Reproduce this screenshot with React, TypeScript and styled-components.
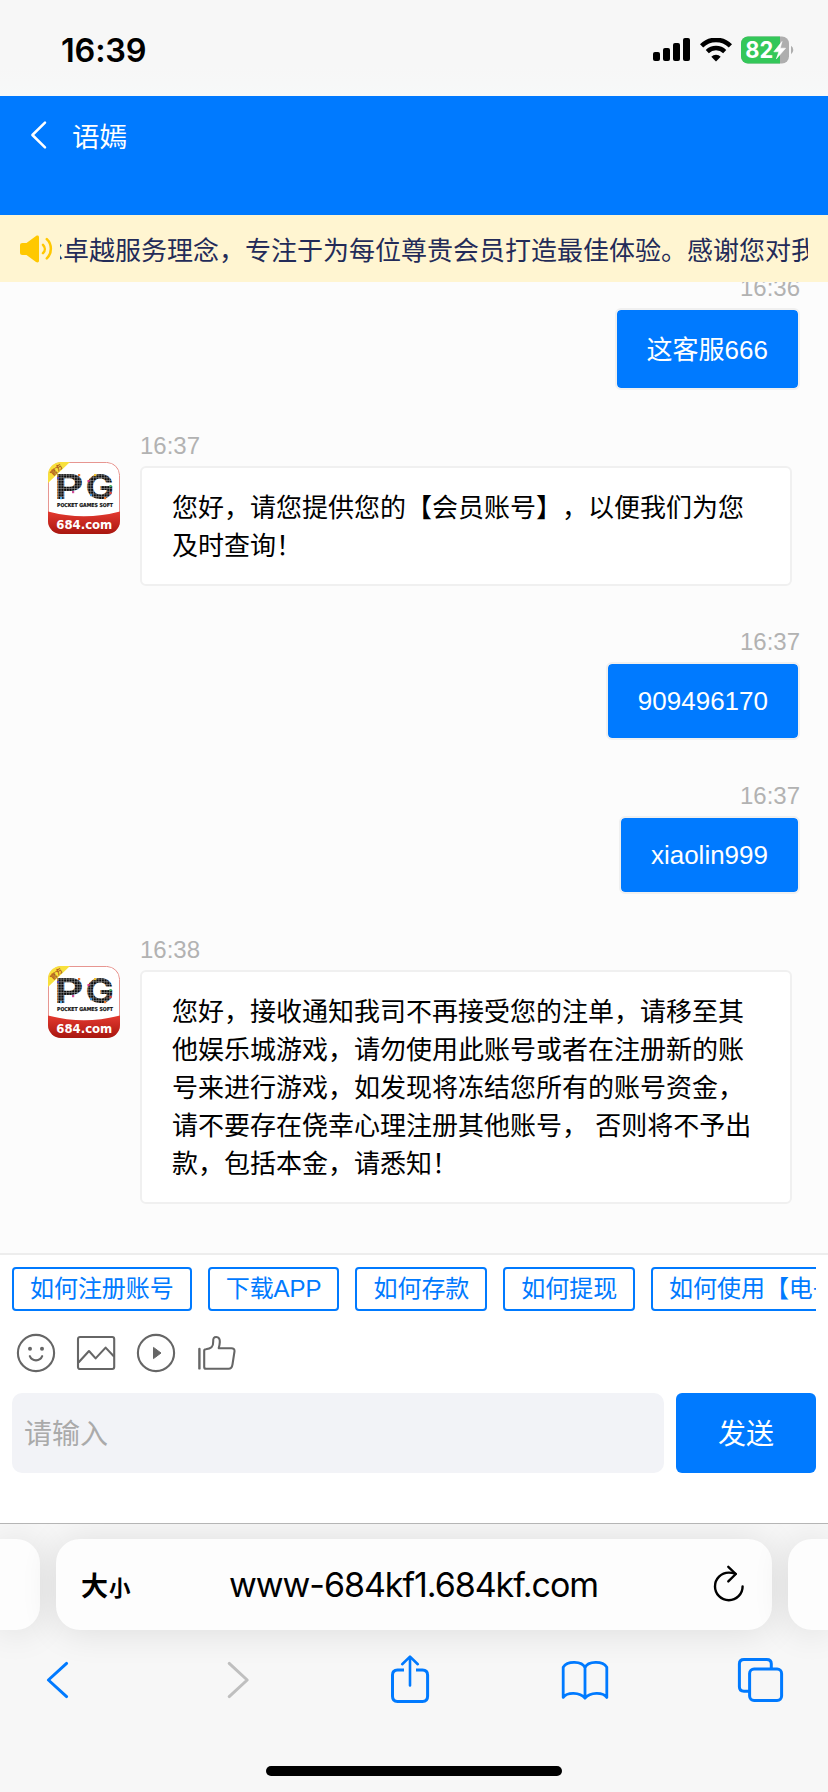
import React from 'react';
import styled, { createGlobalStyle } from 'styled-components';

const BLUE = '#007aff';

const GlobalStyle = createGlobalStyle`
  *, *::before, *::after { box-sizing: border-box; }
  body {
    margin: 0;
    background: #fff;
    font-family: 'Liberation Sans', 'Noto Sans CJK SC', sans-serif;
    text-spacing-trim: space-all;
  }
  svg { display: block; flex: none; }
`;

const Screen = styled.div`
  width: 828px;
  height: 1792px;
  display: flex;
  flex-direction: column;
  overflow: hidden;
`;

const StatusBar = styled.header`
  flex: none;
  height: 96px;
  padding: 4px 33px 0 61px;
  display: flex;
  align-items: center;
  justify-content: space-between;
  background: linear-gradient(#f7f7f7 70%, #f7f9f9);
`;

const Clock = styled.time`
  font: 600 32.5px/40px Inter, sans-serif;
  letter-spacing: -0.2px;
  padding-top: 1px;
  color: #000;
`;

const StatusIcons = styled.div`
  display: flex;
  align-items: center;
  gap: 9px;
`;

const ChatHeader = styled.div`
  flex: none;
  height: 119px;
  padding: 20px 30px;
  display: flex;
  align-items: flex-start;
  background: ${BLUE};
`;

const AgentName = styled.h1`
  margin: 2px 0 0 23px;
  font-size: 27.5px;
  line-height: 40px;
  font-weight: 400;
  color: #fff;
`;

const Notice = styled.div`
  flex: none;
  height: 67px;
  padding: 0 20px;
  display: flex;
  align-items: center;
  gap: 7px;
  background: #fff5d1;
  position: relative;
  z-index: 1;
`;

const Ticker = styled.div`
  flex: 1;
  overflow: hidden;
  white-space: nowrap;
  text-indent: -23px;
  font-size: 26px;
  line-height: 40px;
  margin-top: 5px;
  color: #232b58;
`;

const Chat = styled.main`
  flex: none;
  height: 971px;
  padding: 0 28px 49px 48px;
  display: flex;
  flex-direction: column;
  justify-content: flex-end;
  gap: 42px;
  background: #fcfcfc;
`;

const Row = styled.div<{ $mine?: boolean }>`
  display: flex;
  gap: 20px;
  justify-content: ${(p) => (p.$mine ? 'flex-end' : 'flex-start')};
`;

const AvatarSlot = styled.div`
  padding-top: 30px;
`;

const Message = styled.div<{ $mine?: boolean }>`
  display: flex;
  flex-direction: column;
  gap: 6px;
  align-items: ${(p) => (p.$mine ? 'flex-end' : 'flex-start')};
`;

const Stamp = styled.time`
  font-size: 24px;
  line-height: 28px;
  color: #b2b2b2;
`;

const Bubble = styled.div<{ $mine?: boolean; $latin?: boolean }>`
  width: ${(p) => (p.$mine ? 'auto' : '652px')};
  padding: ${(p) => (p.$latin ? '20px 30px' : '21px 30px 19px')};
  border: 2px solid #f0f0f0;
  border-radius: 6px;
  background: ${(p) => (p.$mine ? BLUE : '#fff')};
  background-clip: padding-box;
  color: ${(p) => (p.$mine ? '#fff' : '#000')};
  font-size: 26px;
  line-height: ${(p) => (p.$latin ? '34px' : '38px')};
  white-space: pre;
`;

const Composer = styled.footer`
  flex: none;
  height: 270px;
  padding: 12px 12px 0;
  border-top: 2px solid #ededed;
  background: #fff;
`;

const QuickReplies = styled.div`
  display: flex;
  gap: 16px;
  overflow: hidden;
`;

const QuickReply = styled.button`
  flex: none;
  height: 44px;
  padding: 0 16px;
  border: 2px solid ${BLUE};
  border-radius: 4px;
  background: transparent;
  color: ${BLUE};
  font: inherit;
  font-size: 24px;
  letter-spacing: -0.05px;
  line-height: 40px;
  white-space: nowrap;
`;

const Tools = styled.div`
  display: flex;
  gap: 20px;
  margin: 22px 0 20px 4px;
`;

const InputRow = styled.div`
  display: flex;
  gap: 12px;
`;

const Field = styled.div`
  flex: 1;
  height: 80px;
  padding: 1px 12px 0;
  border-radius: 10px;
  background: #f2f3f7;
  color: #aaa;
  font-size: 28px;
  line-height: 82px;
`;

const Send = styled.button`
  width: 140px;
  height: 80px;
  padding: 3px 0 0;
  border: 0;
  border-radius: 6px;
  background: ${BLUE};
  color: #fff;
  font: inherit;
  font-size: 28px;
  line-height: 77px;
`;

const Browser = styled.nav`
  flex: 1;
  border-top: 1px solid #b5b5b5;
  background: #f7f7f7;
  display: flex;
  flex-direction: column;
  align-items: center;
  overflow: hidden;
`;

const TabStrip = styled.div`
  width: 100%;
  height: 91px;
  margin-top: 15px;
  display: flex;
  gap: 16px;
`;

const TabCard = styled.div<{ $side?: 'left' | 'right' }>`
  flex: ${(p) => (p.$side ? '0 0 40px' : '1')};
  border-radius: ${(p) =>
    p.$side === 'left' ? '0 24px 24px 0' : p.$side === 'right' ? '24px 0 0 24px' : '24px'};
  background: #fdfdfd;
  box-shadow: 0 2px 36px rgba(0, 0, 0, 0.11);
  padding: ${(p) => (p.$side ? '0' : '0 26px 0 25px')};
  display: flex;
  align-items: center;
  justify-content: space-between;
  position: relative;
`;

const TextSize = styled.span`
  display: flex;
  align-items: baseline;
  width: 34px;
  padding-top: 3px;
  font: 700 27px/40px 'Noto Sans CJK SC', sans-serif;
  color: #000;
  white-space: nowrap;
  small { font-size: 21.5px; margin-left: 1px; }
`;

const Address = styled.span`
  font: 400 34px/44px Inter, sans-serif;
  letter-spacing: -1.05px;
  color: #000;
`;

const Toolbar = styled.div`
  width: 100%;
  margin-top: 20px;
  padding: 0 38px 0 28px;
  display: flex;
  justify-content: space-between;
`;

const HomeBar = styled.div`
  width: 296px;
  height: 10px;
  margin-top: 56px;
  border-radius: 5px;
  background: #000;
`;

const Signal = () => (
  <svg width="38" height="24" viewBox="0 0 38 24">
    <rect x="0" y="14" width="7" height="9" rx="2" />
    <rect x="10" y="10" width="7" height="13" rx="2" />
    <rect x="20" y="5" width="7" height="18" rx="2" />
    <rect x="30" y="0" width="7" height="23" rx="2" />
  </svg>
);

const Wifi = () => (
  <svg width="32" height="24" viewBox="0 0 32 24">
    <path d="M1.6 7.8 A20.5 20.5 0 0 1 30.4 7.8" fill="none" stroke="#000" strokeWidth="4.6" />
    <path d="M7.3 13.6 A12.4 12.4 0 0 1 24.7 13.6" fill="none" stroke="#000" strokeWidth="4.4" />
    <path d="M11.3 18.8 A6.6 6.6 0 0 1 20.7 18.8 L16 23.6 Z" />
  </svg>
);

const Battery = () => (
  <svg width="54" height="28" viewBox="0 0 54 28">
    <defs>
      <clipPath id="cell"><rect x="0" y="0.5" width="48" height="27" rx="7" /></clipPath>
    </defs>
    <g clipPath="url(#cell)">
      <rect width="54" height="28" fill="#aeaeae" />
      <rect width="39" height="28" fill="#34c759" />
    </g>
    <path d="M50 9.8 A5 5 0 0 1 50 18.2 Z" fill="#aeaeae" />
    <text x="4.2" y="22" fontFamily="Inter, sans-serif" fontWeight="700" fontSize="22.5" fill="#fff" textLength="28" lengthAdjust="spacingAndGlyphs">82</text>
    <path d="M41 5.5 L32.8 15.8 H37.8 L35.4 22.8 L44.6 12.2 H39.2 Z" fill="#fff" stroke="#fff" strokeWidth="0.6" strokeLinejoin="round" />
  </svg>
);

const BackArrow = () => (
  <svg width="19" height="38" viewBox="0 0 19 38" fill="none" stroke="#fff" strokeWidth="2.5" strokeLinecap="round" strokeLinejoin="round">
    <path d="M15 6.6 L2.4 19 L15 31.4" />
  </svg>
);

const Speaker = () => (
  <svg width="33" height="28" viewBox="0 0 33 28">
    <path d="M2.5 8 H6.5 L16 1 C17.6 0 19 0.6 19 2.2 V25.8 C19 27.4 17.6 28 16 27 L6.5 20 H2.5 C0.8 20 0 19.2 0 17.5 V10.5 C0 8.8 0.8 8 2.5 8 Z" fill="#ffc800" />
    <path d="M23 9.8 C25.4 12.2 25.4 15.8 23 18.2 M26.8 4.2 C32.2 9.4 32.2 18 26.8 23.4" fill="none" stroke="#ffc800" strokeWidth="2.5" strokeLinecap="round" />
  </svg>
);

const bits: [number, number, string][] = [
  [30, 12, '#e8792e'], [9, 15, '#5b4bb0'], [24, 29, '#d04f9c'], [12, 35, '#4aa3e0'],
  [46, 12, '#f0c330'], [39.5, 18, '#d8358a'], [61.5, 23, '#4cb56a'], [61.5, 30, '#e0443a'],
  [42, 32, '#3f8fd8'], [56, 35, '#e8792e'],
];

const Avatar = ({ id }: { id: string }) => (
  <svg width="72" height="72" viewBox="0 0 72 72">
    <defs>
      <clipPath id={`${id}-c`}><rect width="72" height="72" rx="13" /></clipPath>
      <linearGradient id={`${id}-r`} x1="0" y1="0" x2="0" y2="1">
        <stop offset="0" stopColor="#e43a30" />
        <stop offset="1" stopColor="#a8160f" />
      </linearGradient>
      <pattern id={`${id}-p`} width="2.7" height="2.7" patternUnits="userSpaceOnUse">
        <rect width="2.7" height="2.7" fill="#aaa" />
        <rect width="2.2" height="2.2" fill="#0c0c0c" />
      </pattern>
    </defs>
    <g clipPath={`url(#${id}-c)`}>
      <rect width="72" height="72" fill="#fff" />
      <rect x="0.4" y="0.4" width="71.2" height="71.2" rx="13" fill="none" stroke="#e58a84" strokeWidth="1" />
      <path d="M0 0 H22 L0 21 Z" fill="#f8e03c" />
      <text transform="translate(5 14.5) rotate(-43)" fontFamily="Noto Sans CJK SC" fontWeight="700" fontSize="7" fill="#a8521c">官方</text>
      <g fontFamily="Inter" fontWeight="700" fontSize="34.5" fill={`url(#${id}-p)`}>
        <text x="6.6" y="37" textLength="29" lengthAdjust="spacingAndGlyphs">P</text>
        <text x="37.4" y="37" textLength="28.5" lengthAdjust="spacingAndGlyphs">G</text>
      </g>
      {bits.map(([x, y, c], i) => <rect key={i} x={x} y={y} width="2.2" height="2.2" fill={c} />)}
      <text x="9" y="44.6" fontFamily="DejaVu Sans" fontWeight="700" fontSize="5.4" fill="#111" stroke="#111" strokeWidth="0.2" textLength="56" lengthAdjust="spacingAndGlyphs">POCKET GAMES SOFT</text>
      <path d="M0 49.5 Q36 59 72 49.5 V72 H0 Z" fill={`url(#${id}-r)`} />
      <text x="8.3" y="66.6" fontFamily="DejaVu Sans" fontWeight="700" fontSize="12" fill="#fff" textLength="56" lengthAdjust="spacingAndGlyphs">684.com</text>
    </g>
  </svg>
);

const toolProps = { width: 40, height: 40, viewBox: '0 0 40 40', fill: 'none', stroke: '#666', strokeWidth: 2.1, strokeLinejoin: 'round' as const };

const Smile = () => (
  <svg {...toolProps}>
    <circle cx="20" cy="20" r="18.1" />
    <circle cx="14" cy="15.8" r="2" fill="#666" stroke="none" />
    <circle cx="26" cy="15.8" r="2" fill="#666" stroke="none" />
    <path d="M13.8 23.2 C16 28.7 24 28.7 26.2 23.2" strokeLinecap="round" />
  </svg>
);

const Picture = () => (
  <svg {...toolProps}>
    <rect x="2" y="4" width="36.2" height="32" rx="2" />
    <path d="M2.5 29.5 L13 18 L19.6 25.4 L29.6 14.6 L38 23.4" />
  </svg>
);

const Play = () => (
  <svg {...toolProps}>
    <circle cx="20" cy="20" r="18.1" />
    <path d="M17.5 14.4 L25 20 L17.5 25.6 Z" fill="#666" strokeWidth="1" />
  </svg>
);

const ThumbUp = () => (
  <svg {...toolProps}>
    <path d="M3.4 16 V35.4" strokeLinecap="round" strokeWidth="2.4" />
    <path d="M9.7 16.2 C15 16 17.4 14 17.2 8.5 C17 5.2 18 4 20.2 4 C22.8 4 24 6 23.8 9 C23.7 11 23.5 12.8 22.7 15.2 H35.4 C37.4 15.2 38.8 16.5 38.5 18.4 L36.5 31.4 C36.1 34.3 35 35.8 32.6 35.8 H10 C8.8 35.8 8.2 35.2 8.2 34 V17.8 C8.2 16.8 8.8 16.2 9.7 16.2 Z" />
  </svg>
);

const Reload = () => (
  <svg width="34" height="40" viewBox="0 0 34 40" fill="none" stroke="#000" strokeWidth="2.4" strokeLinecap="round" strokeLinejoin="round">
    <path d="M30.6 21.4 A13.8 13.8 0 1 1 16.8 7.6 C19.5 7.6 21.8 8.2 23.6 8.9" />
    <path d="M16.3 1.8 L23.8 9 L16.3 16.4" />
  </svg>
);

const barProps = { width: 60, height: 60, viewBox: '0 0 60 60', fill: 'none', stroke: BLUE, strokeWidth: 3, strokeLinecap: 'round' as const, strokeLinejoin: 'round' as const };

const messages = [
  { time: '16:36', mine: true, text: '这客服666' },
  { time: '16:37', mine: false, text: '您好，请您提供您的【会员账号】，以便我们为您\n及时查询！' },
  { time: '16:37', mine: true, latin: true, text: '909496170' },
  { time: '16:37', mine: true, latin: true, text: 'xiaolin999' },
  {
    time: '16:38',
    mine: false,
    text: '您好，接收通知我司不再接受您的注单，请移至其\n他娱乐城游戏，请勿使用此账号或者在注册新的账\n号来进行游戏，如发现将冻结您所有的账号资金，\n请不要存在侥幸心理注册其他账号， 否则将不予出\n款，包括本金，请悉知！',
  },
];

const replies = ['如何注册账号', '下载APP', '如何存款', '如何提现', '如何使用【电子'];

export default function App() {
  return (
    <Screen>
      <GlobalStyle />
      <StatusBar>
        <Clock>16:39</Clock>
        <StatusIcons>
          <Signal />
          <Wifi />
          <Battery />
        </StatusIcons>
      </StatusBar>
      <ChatHeader>
        <BackArrow />
        <AgentName>语嫣</AgentName>
      </ChatHeader>
      <Notice>
        <Speaker />
        <Ticker>承卓越服务理念，专注于为每位尊贵会员打造最佳体验。感谢您对我</Ticker>
      </Notice>
      <Chat>
        {messages.map((m, i) => (
          <Row key={i} $mine={m.mine}>
            {!m.mine && <AvatarSlot><Avatar id={`avatar${i}`} /></AvatarSlot>}
            <Message $mine={m.mine}>
              <Stamp>{m.time}</Stamp>
              <Bubble $mine={m.mine} $latin={m.latin}>{m.text}</Bubble>
            </Message>
          </Row>
        ))}
      </Chat>
      <Composer>
        <QuickReplies>
          {replies.map((r) => <QuickReply key={r}>{r}</QuickReply>)}
        </QuickReplies>
        <Tools>
          <Smile />
          <Picture />
          <Play />
          <ThumbUp />
        </Tools>
        <InputRow>
          <Field>请输入</Field>
          <Send>发送</Send>
        </InputRow>
      </Composer>
      <Browser>
        <TabStrip>
          <TabCard $side="left" />
          <TabCard>
            <TextSize>大<small>小</small></TextSize>
            <Address>www-684kf1.684kf.com</Address>
            <Reload />
          </TabCard>
          <TabCard $side="right" />
        </TabStrip>
        <Toolbar>
          <svg {...barProps}><path d="M38.6 13.4 L20.4 30 L38.6 46.6" /></svg>
          <svg {...barProps} stroke="#bfbfbf"><path d="M25.2 13.4 L43.2 30 L25.2 46.6" /></svg>
          <svg {...barProps}>
            <path d="M25 20 H18.5 Q13.5 20 13.5 25 V46.3 Q13.5 51.4 18.5 51.4 H43.5 Q48.6 51.4 48.6 46.3 V25 Q48.6 20 43.5 20 H37" strokeLinecap="butt" />
            <path d="M31 35.5 V7 M23.2 14.2 L31 6.6 L38.8 14.2" strokeWidth="2.6" />
          </svg>
          <svg {...barProps} strokeWidth="2.8">
            <path d="M30 17.6 C27 11 12.5 10.5 8.2 17.2 V47.4 C12 42 25 42 30 48.2 C35 42 48 42 51.8 47.4 V17.2 C47.5 10.5 33 11 30 17.6 Z M30 17.6 V48" />
          </svg>
          <svg {...barProps}>
            <rect x="19.6" y="19" width="32" height="31.4" rx="4.5" />
            <path d="M19 41.2 H14 Q9.4 41.2 9.4 36.8 V13.8 Q9.4 9.4 14 9.4 H36.7 Q41.3 9.4 41.3 13.8 V18" strokeLinecap="butt" />
          </svg>
        </Toolbar>
        <HomeBar />
      </Browser>
    </Screen>
  );
}
